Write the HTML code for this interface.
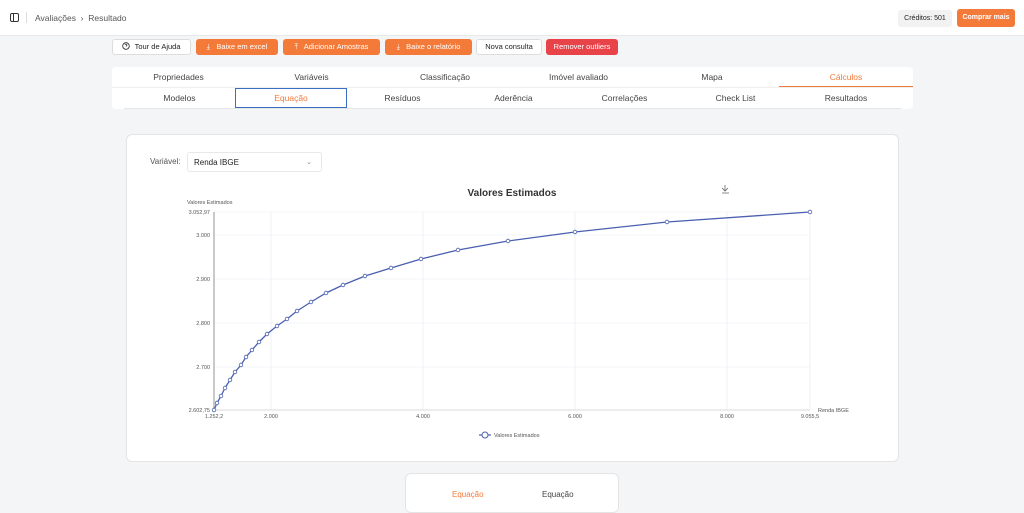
<!DOCTYPE html>
<html><head><style>
*{box-sizing:border-box;margin:0;padding:0}
body{width:1024px;height:496px;overflow:hidden;background:#f4f5f7;font-family:"Liberation Sans",sans-serif;position:relative;color:#333}
.top{position:absolute;left:0;top:0;width:1024px;height:36px;background:#fff;border-bottom:1px solid #e8e8e8}
.btn{position:absolute;top:39px;height:16px;border-radius:3px;font-size:7.5px;line-height:16px;text-align:center;color:#fff;background:#f47a3a}
.wb{background:#fff;color:#222;border:1px solid #ddd;line-height:14px}
.tabs{position:absolute;left:112px;top:67px;width:801px;height:42px;background:#fff;border-radius:4px}
.t{position:absolute;font-size:8.5px;color:#444;text-align:center}
.card{position:absolute;left:126px;top:134px;width:773px;height:328px;background:#fff;border:1px solid #e4e4e4;border-radius:6px}
.ax{font-size:5.5px;fill:#555;font-family:"Liberation Sans",sans-serif}
</style></head><body>
<div class="top">
<svg style="position:absolute;left:10px;top:13px" width="9" height="9" viewBox="0 0 9 9"><rect x="0.5" y="0.5" width="8" height="8" rx="1.5" fill="none" stroke="#333"/><line x1="3.5" y1="0.5" x2="3.5" y2="8.5" stroke="#333"/></svg>
<div style="position:absolute;left:26px;top:12px;width:1px;height:11px;background:#ddd"></div>
<div style="position:absolute;left:35px;top:13px;font-size:8.5px;color:#555">Avaliações &nbsp;›&nbsp; Resultado</div>
<div style="position:absolute;left:898px;top:10px;width:54px;height:17px;background:#f2f2f2;border-radius:3px;font-size:7px;line-height:17px;text-align:center;color:#222">Créditos: 501</div>
<div style="position:absolute;left:957px;top:9px;width:58px;height:18px;background:#f47a3a;border-radius:3px;font-size:7px;line-height:18px;text-align:center;color:#fff;font-weight:bold">Comprar mais</div>
</div>
<div class="btn wb" style="left:112px;width:79px"><svg width="8" height="8" viewBox="0 0 8 8" style="vertical-align:-1px"><circle cx="4" cy="4" r="3.3" fill="none" stroke="#222" stroke-width="0.8"/><path d="M3 3a1 1 0 1 1 1.3 1L4 4.6" fill="none" stroke="#222" stroke-width="0.7"/></svg> &nbsp;Tour de Ajuda</div>
<div class="btn" style="left:196px;width:82px">⤓ &nbsp; Baixe em excel</div>
<div class="btn" style="left:283px;width:97px">⤒ &nbsp; Adicionar Amostras</div>
<div class="btn" style="left:385px;width:87px">⤓ &nbsp; Baixe o relatório</div>
<div class="btn wb" style="left:476px;width:66px">Nova consulta</div>
<div class="btn" style="left:546px;width:72px;background:#e9434a">Remover outliers</div>
<div class="tabs">
<div class="t" style="left:0;width:133px;top:5px">Propriedades</div>
<div class="t" style="left:133px;width:133px;top:5px">Variáveis</div>
<div class="t" style="left:266px;width:134px;top:5px">Classificação</div>
<div class="t" style="left:400px;width:133px;top:5px">Imóvel avaliado</div>
<div class="t" style="left:533px;width:134px;top:5px">Mapa</div>
<div class="t" style="left:667px;width:134px;top:5px;color:#f47a3a">Cálculos</div>
<div style="position:absolute;left:667px;top:19px;width:134px;height:1.5px;background:#f47a3a"></div>
<div style="position:absolute;left:0;top:20px;width:801px;height:1px;background:#eee"></div>
<div style="position:absolute;left:12px;top:41px;width:777px;height:1px;background:#e5e5e5"></div>
<div class="t" style="left:12px;width:111px;top:26px">Modelos</div>
<div class="t" style="left:123px;width:112px;top:21px;height:20px;line-height:19px;border:1.5px solid #3b6fc4;color:#f47a3a">Equação</div>
<div class="t" style="left:235px;width:111px;top:26px">Resíduos</div>
<div class="t" style="left:346px;width:111px;top:26px">Aderência</div>
<div class="t" style="left:457px;width:111px;top:26px">Correlações</div>
<div class="t" style="left:568px;width:111px;top:26px">Check List</div>
<div class="t" style="left:679px;width:110px;top:26px">Resultados</div>
</div>
<div class="card">
<div style="position:absolute;left:23px;top:22px;font-size:8px;color:#555">Variável:</div>
<div style="position:absolute;left:60px;top:17px;width:135px;height:20px;border:1px solid #e8e8e8;border-radius:3px;font-size:8px;line-height:19px;padding-left:6px;color:#222">Renda IBGE<span style="position:absolute;right:9px;top:0;color:#888;font-size:7px">⌄</span></div>
</div>
<svg style="position:absolute;left:0;top:0" width="1024" height="496">
<text x="512" y="196" text-anchor="middle" font-size="10" font-weight="bold" fill="#333" font-family="Liberation Sans">Valores Estimados</text>
<path d="M725 185v6M722 188l3 3 3-3M722 193h7" stroke="#666" fill="none" stroke-width="0.8"/>
<text x="187" y="204" class="ax">Valores Estimados</text>
<g stroke="#e6e9f0" stroke-width="0.6">
<line x1="214" y1="212" x2="810" y2="212"/><line x1="214" y1="235" x2="810" y2="235"/><line x1="214" y1="279" x2="810" y2="279"/><line x1="214" y1="323" x2="810" y2="323"/><line x1="214" y1="367" x2="810" y2="367"/>
<line x1="271" y1="212" x2="271" y2="410"/><line x1="423" y1="212" x2="423" y2="410"/><line x1="575" y1="212" x2="575" y2="410"/><line x1="727" y1="212" x2="727" y2="410"/><line x1="810" y1="212" x2="810" y2="410"/>
</g>
<line x1="214" y1="212" x2="214" y2="410" stroke="#666" stroke-width="0.7"/>
<line x1="214" y1="410" x2="810" y2="410" stroke="#ccc" stroke-width="0.7"/>
<g class="ax" text-anchor="end">
<text x="210" y="214">3.052,97</text><text x="210" y="237">3.000</text><text x="210" y="281">2.900</text><text x="210" y="325">2.800</text><text x="210" y="369">2.700</text><text x="210" y="412">2.602,75</text>
</g>
<g class="ax" text-anchor="middle">
<text x="214" y="418">1.252,2</text><text x="271" y="418">2.000</text><text x="423" y="418">4.000</text><text x="575" y="418">6.000</text><text x="727" y="418">8.000</text><text x="810" y="418">9.055,5</text>
</g>
<text x="818" y="412" class="ax">Renda IBGE</text>
<polyline fill="none" stroke="#4a5fb0" stroke-width="1.3" points="214,410 217,403 221,396 225,388 230,380 235,372 241,365 246,357 252,350 259,342 267,334 277,326 287,319 297,311 311,302 326,293 343,285 365,276 391,268 421,259 458,250 508,241 575,232 667,222 810,212"/>
<g fill="#fff" stroke="#4a5fb0" stroke-width="0.8">
<circle cx="214" cy="410" r="1.8"/><circle cx="217" cy="403" r="1.8"/><circle cx="221" cy="396" r="1.8"/><circle cx="225" cy="388" r="1.8"/><circle cx="230" cy="380" r="1.8"/><circle cx="235" cy="372" r="1.8"/><circle cx="241" cy="365" r="1.8"/><circle cx="246" cy="357" r="1.8"/><circle cx="252" cy="350" r="1.8"/><circle cx="259" cy="342" r="1.8"/><circle cx="267" cy="334" r="1.8"/><circle cx="277" cy="326" r="1.8"/><circle cx="287" cy="319" r="1.8"/><circle cx="297" cy="311" r="1.8"/><circle cx="311" cy="302" r="1.8"/><circle cx="326" cy="293" r="1.8"/><circle cx="343" cy="285" r="1.8"/><circle cx="365" cy="276" r="1.8"/><circle cx="391" cy="268" r="1.8"/><circle cx="421" cy="259" r="1.8"/><circle cx="458" cy="250" r="1.8"/><circle cx="508" cy="241" r="1.8"/><circle cx="575" cy="232" r="1.8"/><circle cx="667" cy="222" r="1.8"/><circle cx="810" cy="212" r="1.8"/>
</g>
<line x1="479" y1="435" x2="491" y2="435" stroke="#4a5fb0" stroke-width="1.2"/><circle cx="485" cy="435" r="3" fill="#fff" stroke="#4a5fb0"/>
<text x="494" y="437" class="ax">Valores Estimados</text>
</svg>
<div style="position:absolute;left:405px;top:473px;width:214px;height:40px;background:#fff;border:1px solid #e4e4e4;border-radius:6px">
<div style="position:absolute;left:46px;top:16px;font-size:8px;color:#f47a3a">Equação</div>
<div style="position:absolute;left:136px;top:16px;font-size:8px;color:#444">Equação</div>
</div>
</body></html>
